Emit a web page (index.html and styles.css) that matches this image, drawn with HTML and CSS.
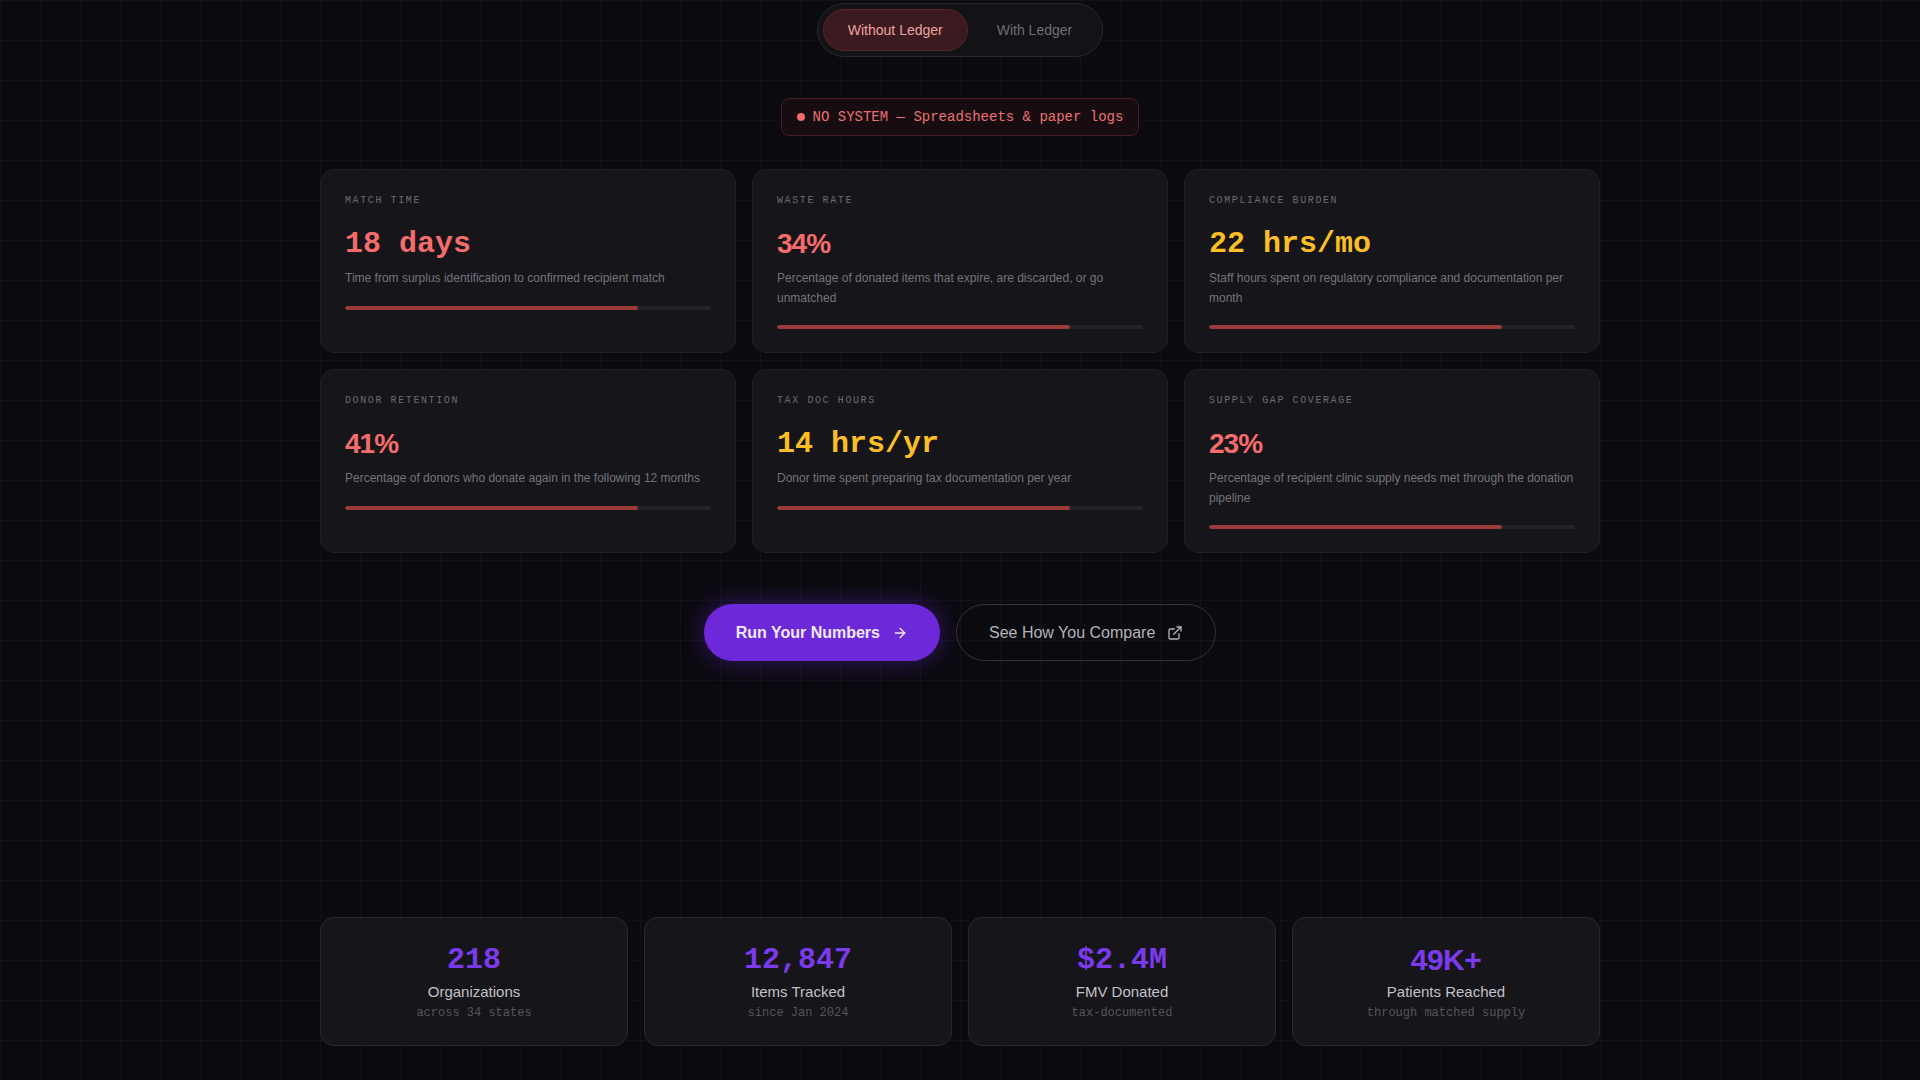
FILE: index.html
```html
<!DOCTYPE html>
<html>
<head>
    <title>Ledger Impact</title>
    <link rel="stylesheet" href="styles.css">
</head>
<body>
    <main class="page">
        <div class="toggle">
            <button class="toggle-btn active">Without Ledger</button>
            <button class="toggle-btn">With Ledger</button>
        </div>

        <div class="status">
            <span class="status-dot"></span>
            NO SYSTEM — Spreadsheets &amp; paper logs
        </div>

        <section class="metrics">
            <div class="metric">
                <div class="metric-label">Match Time</div>
                <div class="metric-value mono red">18 days</div>
                <p class="metric-desc">Time from surplus identification to confirmed recipient match</p>
                <div class="bar"><div class="bar-fill" style="width: 80%"></div></div>
            </div>
            <div class="metric">
                <div class="metric-label">Waste Rate</div>
                <div class="metric-value sans red">34%</div>
                <p class="metric-desc">Percentage of donated items that expire, are discarded, or go unmatched</p>
                <div class="bar"><div class="bar-fill" style="width: 80%"></div></div>
            </div>
            <div class="metric">
                <div class="metric-label">Compliance Burden</div>
                <div class="metric-value mono amber">22 hrs/mo</div>
                <p class="metric-desc">Staff hours spent on regulatory compliance and documentation per month</p>
                <div class="bar"><div class="bar-fill" style="width: 80%"></div></div>
            </div>
            <div class="metric">
                <div class="metric-label">Donor Retention</div>
                <div class="metric-value sans red">41%</div>
                <p class="metric-desc">Percentage of donors who donate again in the following 12 months</p>
                <div class="bar"><div class="bar-fill" style="width: 80%"></div></div>
            </div>
            <div class="metric">
                <div class="metric-label">Tax Doc Hours</div>
                <div class="metric-value mono amber">14 hrs/yr</div>
                <p class="metric-desc">Donor time spent preparing tax documentation per year</p>
                <div class="bar"><div class="bar-fill" style="width: 80%"></div></div>
            </div>
            <div class="metric">
                <div class="metric-label">Supply Gap Coverage</div>
                <div class="metric-value sans red">23%</div>
                <p class="metric-desc">Percentage of recipient clinic supply needs met through the donation pipeline</p>
                <div class="bar"><div class="bar-fill" style="width: 80%"></div></div>
            </div>
        </section>

        <div class="actions">
            <a class="btn btn-primary" href="#">
                Run Your Numbers
                <svg width="16" height="16" viewBox="0 0 24 24" fill="none" stroke="currentColor" stroke-width="2" stroke-linecap="round" stroke-linejoin="round"><path d="M5 12h14"/><path d="m12 5 7 7-7 7"/></svg>
            </a>
            <a class="btn btn-ghost" href="#">
                See How You Compare
                <svg width="16" height="16" viewBox="0 0 24 24" fill="none" stroke="currentColor" stroke-width="2" stroke-linecap="round" stroke-linejoin="round"><path d="M15 3h6v6"/><path d="M10 14 21 3"/><path d="M18 13v6a2 2 0 0 1-2 2H5a2 2 0 0 1-2-2V8a2 2 0 0 1 2-2h6"/></svg>
            </a>
        </div>

        <section class="stats">
            <div class="stat">
                <div class="stat-value mono">218</div>
                <div class="stat-label">Organizations</div>
                <div class="stat-sub">across 34 states</div>
            </div>
            <div class="stat">
                <div class="stat-value mono">12,847</div>
                <div class="stat-label">Items Tracked</div>
                <div class="stat-sub">since Jan 2024</div>
            </div>
            <div class="stat">
                <div class="stat-value mono">$2.4M</div>
                <div class="stat-label">FMV Donated</div>
                <div class="stat-sub">tax-documented</div>
            </div>
            <div class="stat">
                <div class="stat-value sans">49K+</div>
                <div class="stat-label">Patients Reached</div>
                <div class="stat-sub">through matched supply</div>
            </div>
        </section>
    </main>
</body>
</html>
```

FILE: styles.css
```css
body {
    margin: 0;
    min-height: 1080px;
    font-family: "Liberation Sans", Arial, sans-serif;
    color: #c4c4cc;
    background-color: #0b0a0f;
    background-image:
        linear-gradient(rgba(255, 255, 255, 0.028) 1px, transparent 1px),
        linear-gradient(90deg, rgba(255, 255, 255, 0.028) 1px, transparent 1px);
    background-size: 40px 40px;
}

.page {
    display: flex;
    flex-direction: column;
    align-items: center;
    padding-top: 3px;
}

.mono {
    font-family: "Liberation Mono", "Courier New", monospace;
}

.sans {
    font-family: "Liberation Sans", Arial, sans-serif;
}

/* toggle */
.toggle {
    display: flex;
    gap: 4px;
    padding: 5px;
    background-color: #131217;
    border: 1px solid #2a2930;
    border-radius: 999px;
}

.toggle-btn {
    padding: 10px 24px;
    font-family: inherit;
    font-size: 14px;
    line-height: 20px;
    color: #6e6e76;
    background: transparent;
    border: 1px solid transparent;
    border-radius: 999px;
    cursor: pointer;
}

.toggle-btn.active {
    color: #eea3a3;
    background-color: #3a1a1f;
    border-color: #5a2429;
}

/* status */
.status {
    display: flex;
    align-items: center;
    gap: 8px;
    margin-top: 41px;
    padding: 8px 15px;
    font-family: "Liberation Mono", "Courier New", monospace;
    font-size: 14px;
    line-height: 20px;
    color: #ec7070;
    background-color: #170d11;
    border: 1px solid #4a1e25;
    border-radius: 8px;
}

.status-dot {
    width: 8px;
    height: 8px;
    border-radius: 50%;
    background-color: #f26b6b;
}

/* metric cards */
.metrics {
    display: grid;
    grid-template-columns: repeat(3, 1fr);
    gap: 16px;
    width: 1280px;
    margin-top: 33px;
}

.metric {
    padding: 25px 24px 23px;
    background-color: #16151a;
    border: 1px solid #241f25;
    border-radius: 14px;
}

.metric-label {
    font-family: "Liberation Mono", "Courier New", monospace;
    font-size: 10px;
    line-height: 12px;
    letter-spacing: 1.6px;
    text-transform: uppercase;
    color: #6c6c74;
}

.metric-value {
    margin-top: 19px;
    font-size: 30px;
    line-height: 36px;
    font-weight: bold;
}

.metric-value.sans {
    font-size: 28px;
    letter-spacing: -1px;
}

.red {
    color: #f46c6c;
}

.amber {
    color: #fbbf24;
}

.metric-desc {
    margin: 7px 0 0;
    font-size: 12px;
    line-height: 19.5px;
    color: #74747c;
}

.bar {
    height: 4px;
    margin-top: 17px;
    background-color: #232228;
    border-radius: 2px;
    overflow: hidden;
}

.bar-fill {
    height: 100%;
    background-color: #9c3939;
    border-radius: 2px;
}

/* buttons */
.actions {
    display: flex;
    gap: 16px;
    margin-top: 51px;
}

.btn {
    display: flex;
    align-items: center;
    gap: 12px;
    font-size: 16px;
    line-height: 21px;
    text-decoration: none;
    border-radius: 999px;
}

.btn-primary {
    padding: 18px 32px;
    font-weight: bold;
    color: #f1eaff;
    background-color: #6d28d9;
    box-shadow: 0 0 24px rgba(109, 40, 217, 0.45);
}

.btn-ghost {
    padding: 17px 32px;
    color: #b4b4bc;
    border: 1px solid #34333b;
}

/* stats */
.stats {
    display: grid;
    grid-template-columns: repeat(4, 1fr);
    gap: 16px;
    width: 1280px;
    margin-top: 256px;
}

.stat {
    padding: 24px;
    text-align: center;
    background-color: #16151a;
    border: 1px solid #2a2930;
    border-radius: 14px;
}

.stat-value {
    font-size: 30px;
    line-height: 36px;
    font-weight: bold;
    color: #7c3aed;
}

.stat-value.sans {
    letter-spacing: -0.5px;
}

.stat-label {
    margin-top: 4px;
    font-size: 15px;
    line-height: 20px;
    color: #c2c2ca;
}

.stat-sub {
    margin-top: 3px;
    font-family: "Liberation Mono", "Courier New", monospace;
    font-size: 12px;
    line-height: 16px;
    color: #55555d;
}
```
